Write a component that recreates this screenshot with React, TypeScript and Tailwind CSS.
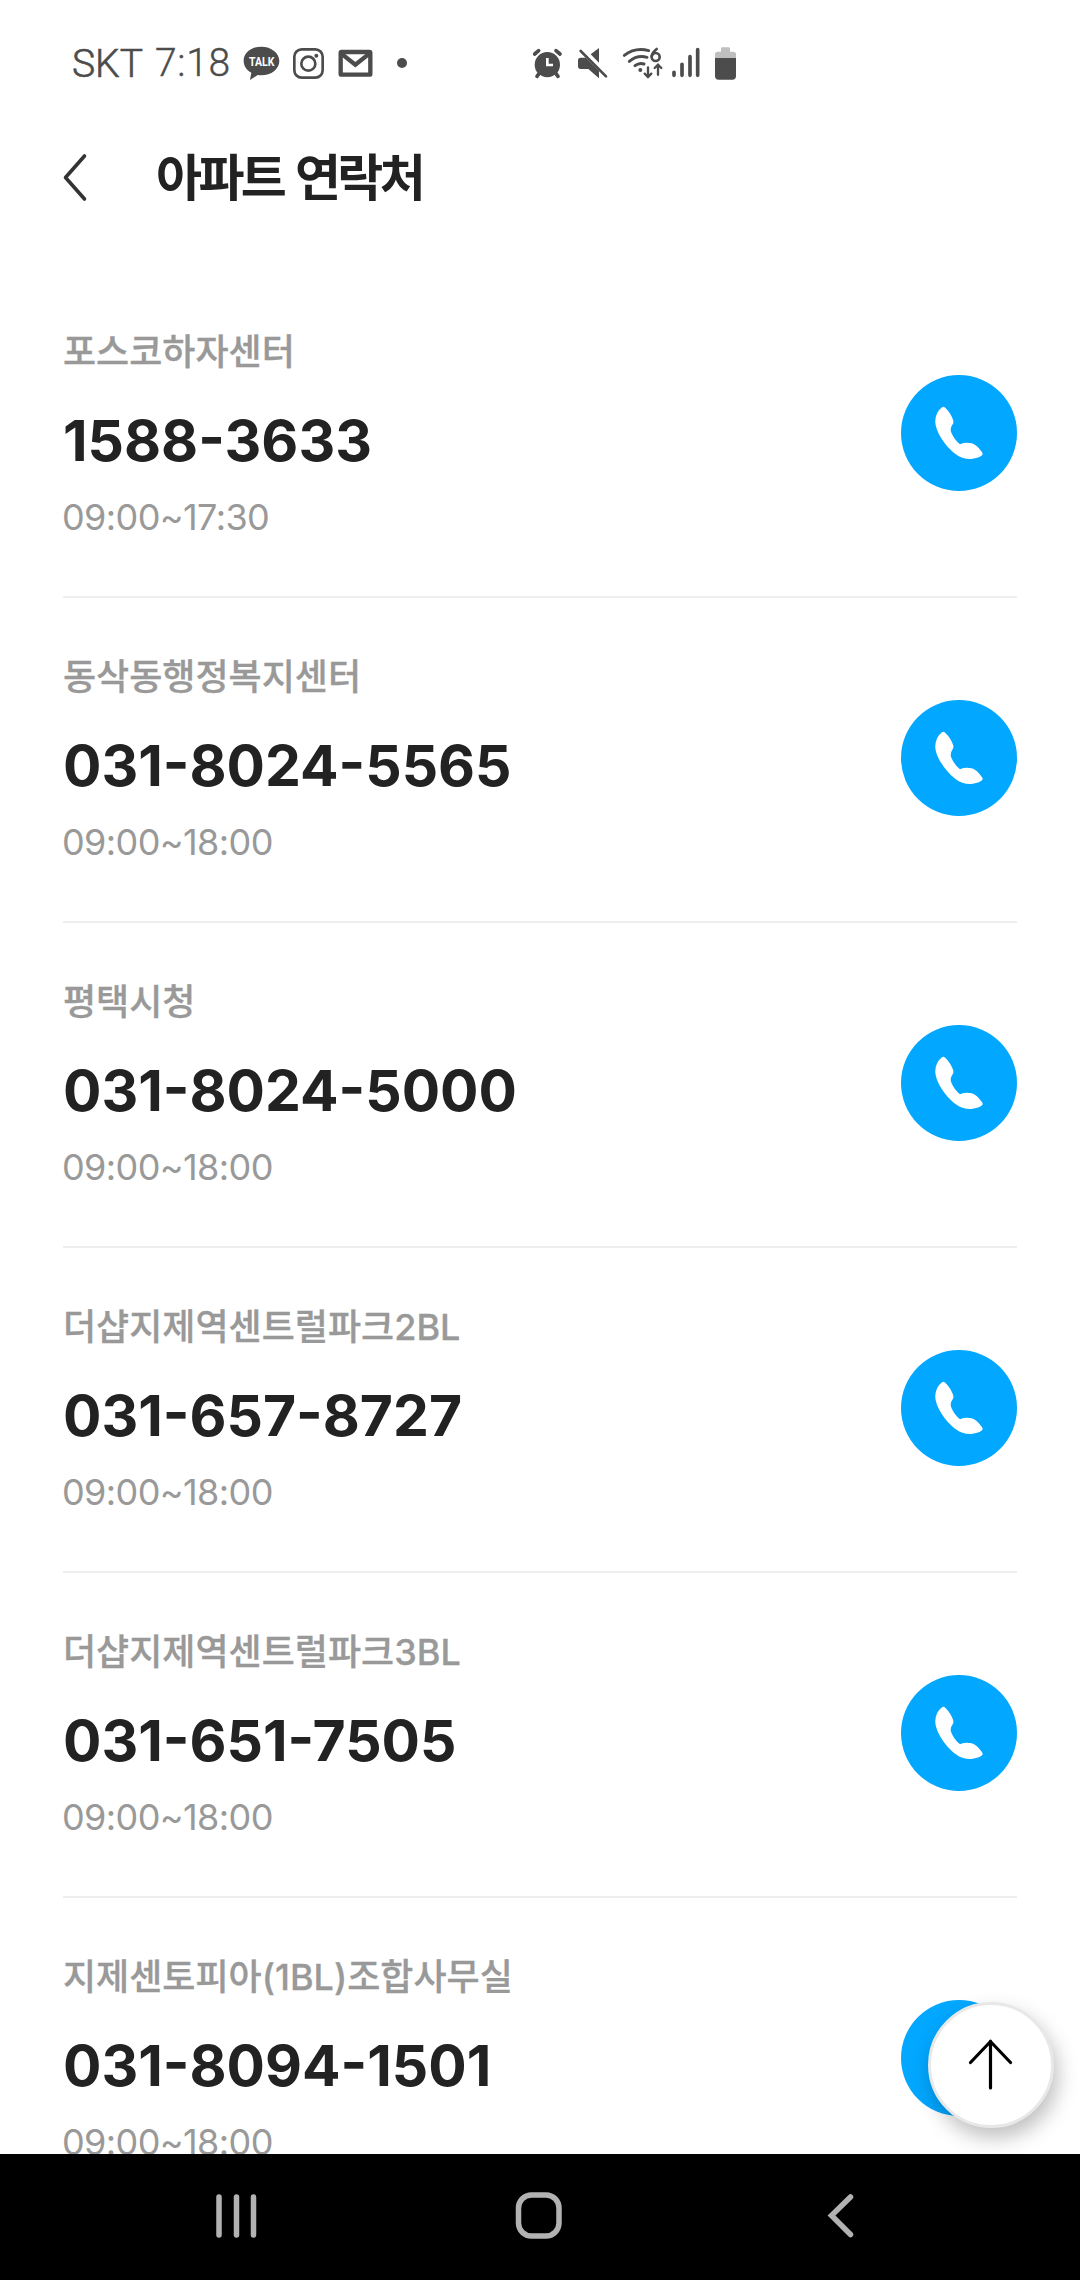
import type { ReactNode } from "react";

interface Contact {
  name: string;
  phone: string;
  hours: string;
}

const contacts: Contact[] = [
  { name: "포스코하자센터", phone: "1588-3633", hours: "09:00~17:30" },
  { name: "동삭동행정복지센터", phone: "031-8024-5565", hours: "09:00~18:00" },
  { name: "평택시청", phone: "031-8024-5000", hours: "09:00~18:00" },
  { name: "더샵지제역센트럴파크2BL", phone: "031-657-8727", hours: "09:00~18:00" },
  { name: "더샵지제역센트럴파크3BL", phone: "031-651-7505", hours: "09:00~18:00" },
  { name: "지제센토피아(1BL)조합사무실", phone: "031-8094-1501", hours: "09:00~18:00" },
];

// All status icons share the same 70px tall strip, drawn at 3 units per pixel
const StatusIcon = ({ x, className, children }: { x: number; className: string; children: ReactNode }) => (
  <svg
    className={`h-[70px] shrink-0 ${className}`}
    viewBox={`${x} 0 1 210`}
    preserveAspectRatio="xMinYMin meet"
    overflow="visible"
    fill="#4c4c4c"
  >
    {children}
  </svg>
);

const StatusBar = () => (
  <div className="flex h-[126px] shrink-0 items-start pl-[72px] pt-[30px] text-[#4c4c4c]">
    <span className="w-[83px] font-['Roboto'] text-[39px] font-light leading-[68px] [-webkit-text-stroke:0.6px_#4c4c4c]">SKT</span>
    <span className="w-[88px] font-['Roboto'] text-[39px] font-light leading-[66px] tracking-[0.7px] [-webkit-text-stroke:0.4px_#4c4c4c]">7:18</span>
    <StatusIcon x={579} className="w-[37px]">
      <path d="M634 50c-30 0-53 18-53 42 0 16 9 28 23 36l-4 22 23-15c4 1 8 1 11 1 30 0 54-19 54-43s-24-43-54-43z" />
      <text x="635" y="108" textAnchor="middle" textLength="76" lengthAdjust="spacingAndGlyphs" fill="#fff" fontFamily="Roboto" fontWeight="700" fontSize="38">
        TALK
      </text>
    </StatusIcon>
    <StatusIcon x={726} className="ml-3 w-[33px]">
      <g fill="none" stroke="#4c4c4c" strokeWidth="8">
        <rect x="733" y="58" width="85" height="85" rx="22" />
        <circle cx="775" cy="101" r="21" />
      </g>
      <circle cx="799" cy="77" r="6" />
    </StatusIcon>
    <StatusIcon x={864} className="ml-[13px] w-[35px]">
      <g fill="none" stroke="#4c4c4c" strokeWidth="13">
        <rect x="872" y="66" width="89" height="68" rx="3" />
        <path d="M873 70l43 34 43-34" />
      </g>
    </StatusIcon>
    <StatusIcon x={1038} className="ml-[23px] w-3">
      <circle cx="1056" cy="99" r="15" />
    </StatusIcon>

    <StatusIcon x={66} className="ml-[124px] w-[31px]">
      <circle cx="112" cy="104" r="38" />
      <g stroke="#4c4c4c" strokeWidth="11" strokeLinecap="round">
        <path d="M74 72l12-10M150 72l-12-10M87 131l-6 8M138 131l6 8" />
      </g>
      <path d="M112 84v21h17" fill="none" stroke="#fff" strokeWidth="8" />
    </StatusIcon>
    <StatusIcon x={201} className="ml-[14px] w-[31px]">
      <path d="M267 54v44l-25-25zM212 83h15l40 40v22l-32-28h-23q-8 0-8-8V91q0-8 8-8z" />
      <path d="M212 63l76 76" stroke="#4c4c4c" strokeWidth="8" strokeLinecap="round" />
    </StatusIcon>
    <StatusIcon x={336} className="ml-[14px] w-[41px]">
      <g fill="none" stroke="#4c4c4c" strokeWidth="9" strokeLinecap="round">
        <path d="M343 76q33-25 73-14M358 94q24-20 53-12M375 107q13-10 27-5" />
        <path d="M414 112v28M404 131l10 10 10-10M444 134v-29M434 114l10-10 10 10" strokeWidth="7" />
        <circle cx="437" cy="81" r="12" strokeWidth="8" />
        <path d="M440 57q-13 10-15 22" strokeWidth="8" />
      </g>
      <circle cx="391" cy="120" r="6" />
    </StatusIcon>
    <StatusIcon x={486} className="ml-[9px] w-[29px]">
      <g stroke="#4c4c4c" strokeWidth="11" strokeLinecap="round">
        <path d="M492 127v9M516 103v33M540 80v56M563 59v77" />
      </g>
    </StatusIcon>
    <StatusIcon x={612} className="ml-[13px] w-[23px]">
      <path d="M615 86V73q0-8 8-8h10v-9q0-4 4-4h19q4 0 4 4v9h10q8 0 8 8v13z" fill="#bfbfbf" />
      <path d="M615 84h63v54q0 11-11 11h-41q-11 0-11-11z" />
    </StatusIcon>
  </div>
);

const Header = () => (
  <header className="flex h-[147px] shrink-0 items-start pl-[62px] pt-[26px]">
    <svg className="h-[50px] w-[26px]" viewBox="0 0 26 50" fill="none" stroke="#333" strokeWidth="3.6" strokeLinecap="round" strokeLinejoin="round">
      <path d="M22.500 4L3.500 25.500l19 21.500" />
    </svg>
    <h1 className="-mt-[3px] ml-[68px] font-['Noto_Sans_CJK_KR',sans-serif] text-[50px] font-bold leading-[50px] tracking-[-3.6px] text-[#222] [word-spacing:4px]">
      아파트 연락처
    </h1>
  </header>
);

const ContactRow = ({ name, phone, hours }: Contact) => (
  <li className="flex h-[325px] shrink-0 items-start justify-between border-b-2 border-[#eee]">
    <div className="pt-[53px]">
      <p className="whitespace-nowrap font-['Inter','Noto_Sans_CJK_KR',sans-serif] text-[36px] font-medium leading-[52px] text-[#999] [-webkit-text-stroke:0.3px_#999]">
        {name}
      </p>
      <p className="mt-[25px] font-['Inter',sans-serif] text-[57px] font-bold leading-[76px] text-[#222]">{phone}</p>
      <p className="-ml-px mt-[14px] font-['Inter',sans-serif] text-[36px] leading-[48px] tracking-[-0.6px] text-[#999]">{hours}</p>
    </div>
    <button className="mt-[102px] size-[116px] shrink-0 rounded-full bg-[#02a7ff]" aria-label={phone}>
      <svg className="size-full" viewBox="0 0 116 116" fill="#fff">
        <path d="M41 32.200Q42.500 31 44 32.400C48 36 51 41 52.300 45.500Q52.800 47.500 51.500 49.500Q48.500 54 50.500 58Q53.500 65 59 69.300Q64 67 70.500 68.300C75 69.500 79 74 81.500 78Q82.200 79.500 80.500 80.800C73 85.500 62 85 54.500 79C44 71 34 56 34.300 46Q34.600 37 41 32.200Z" />
      </svg>
    </button>
  </li>
);

const NavBar = () => (
  <nav className="relative z-20 flex h-[126px] shrink-0 items-start bg-black pt-[34px]">
    <svg className="ml-[215px] h-[56px] w-[42px]" viewBox="0 0 42 56" stroke="#b2b2b2" strokeWidth="5.500" strokeLinecap="round">
      <path d="M4 9v38M21.500 9v38M38.500 9v38" />
    </svg>
    <svg className="ml-[256px] h-[56px] w-[52px]" viewBox="0 0 52 56" fill="none" stroke="#b2b2b2" strokeWidth="5.500">
      <rect x="5.500" y="7" width="40.500" height="41" rx="13" />
    </svg>
    <svg className="ml-[260px] h-[56px] w-[32px]" viewBox="0 0 32 56" fill="none" stroke="#b2b2b2" strokeWidth="5.500" strokeLinecap="round">
      <path d="M25.500 9L6.500 27.500l19 19" />
    </svg>
  </nav>
);

const App = () => {
  return (
    <div className="relative flex h-[2280px] w-[1080px] flex-col overflow-hidden bg-white">
      <StatusBar />
      <Header />
      <ul className="flex min-h-0 flex-1 flex-col overflow-hidden px-[63px]">
        {contacts.map((contact) => (
          <ContactRow key={contact.phone} {...contact} />
        ))}
      </ul>

      {/* Scroll to top, floats over the list */}
      <button className="absolute left-[928px] top-[2002px] z-10 size-[126px] rounded-full border-[3px] border-[#e8e8e8] bg-white shadow-[4px_10px_20px_rgba(0,0,0,0.25)]">
        <svg className="size-full" viewBox="0 0 120 120" fill="none" stroke="#000" strokeWidth="3.200" strokeLinecap="round" strokeLinejoin="round">
          <path d="M59.500 83V36M39.500 57.500l20-21 20 21" />
        </svg>
      </button>
      <NavBar />
    </div>
  );
};

export default App;
